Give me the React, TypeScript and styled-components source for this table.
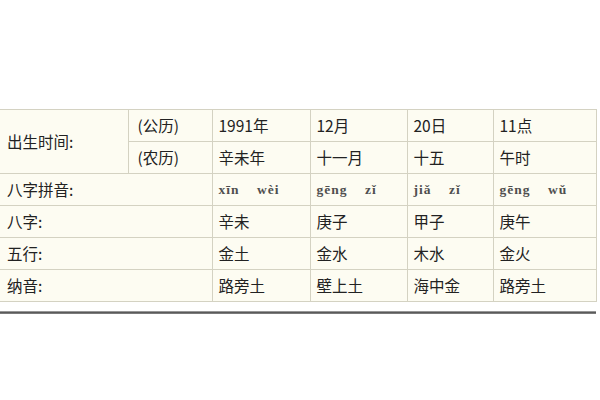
import React from "react";
import styled, { createGlobalStyle } from "styled-components";

const Global = createGlobalStyle`
  html, body { margin: 0; padding: 0; background: #ffffff; }
  body { font-family: "Noto Sans CJK SC", "Noto Sans", sans-serif; }
`;

const Page = styled.div`
  width: 600px;
  height: 400px;
  padding-top: 109px;
  box-sizing: border-box;
`;

const Table = styled.table`
  width: 596px;
  border-collapse: collapse;
  table-layout: fixed;
  background: #fdfcf2;
`;

const Cell = styled.td<{ $pad?: number; $pinyin?: boolean }>`
  height: 31px;
  padding: 0 0 0 ${(p) => p.$pad ?? 6}px;
  border: 1px solid #d4d2c2;
  font-size: ${(p) => (p.$pinyin ? "13.5px" : "15.5px")};
  font-family: ${(p) =>
    p.$pinyin
      ? '"Liberation Serif", serif'
      : '"Noto Sans CJK SC", "Noto Sans", sans-serif'};
  font-weight: ${(p) => (p.$pinyin ? 700 : 400)};
  letter-spacing: ${(p) => (p.$pinyin ? "1px" : "0")};
  color: ${(p) => (p.$pinyin ? "#4f4f4f" : "#222")};
  white-space: pre;
  vertical-align: middle;
  line-height: 1;
  &:first-child { border-left: none; }
`;

const Rule = styled.div`
  width: 596px;
  height: 3px;
  margin-top: 9px;
  background: linear-gradient(#b5b5b5, #5a5a5a 50%, #8a8a8a);
`;

const widths = [128, 84, 98, 97, 86, 103];

type Row = { label: string; cells: string[]; pinyin?: boolean };

const rows: Row[] = [
  { label: "八字拼音:", cells: ["xīn    wèi", "gēng    zǐ", "jiǎ    zǐ", "gēng    wǔ"], pinyin: true },
  { label: "八字:", cells: ["辛未", "庚子", "甲子", "庚午"] },
  { label: "五行:", cells: ["金土", "金水", "木水", "金火"] },
  { label: "纳音:", cells: ["路旁土", "壁上土", "海中金", "路旁土"] },
];

export default function App() {
  return (
    <>
      <Global />
      <Page>
        <Table>
          <colgroup>
            {widths.map((w, i) => (
              <col key={i} style={{ width: w }} />
            ))}
          </colgroup>
          <tbody>
            <tr>
              <Cell rowSpan={2} $pad={7}>出生时间:</Cell>
              <Cell $pad={9}>(公历)</Cell>
              <Cell>1991年</Cell>
              <Cell>12月</Cell>
              <Cell>20日</Cell>
              <Cell>11点</Cell>
            </tr>
            <tr>
              <Cell $pad={9}>(农历)</Cell>
              <Cell>辛未年</Cell>
              <Cell>十一月</Cell>
              <Cell>十五</Cell>
              <Cell>午时</Cell>
            </tr>
            {rows.map((r) => (
              <tr key={r.label}>
                <Cell colSpan={2} $pad={7}>{r.label}</Cell>
                {r.cells.map((c, i) => (
                  <Cell key={i} $pinyin={r.pinyin}>{c}</Cell>
                ))}
              </tr>
            ))}
          </tbody>
        </Table>
        <Rule />
      </Page>
    </>
  );
}
